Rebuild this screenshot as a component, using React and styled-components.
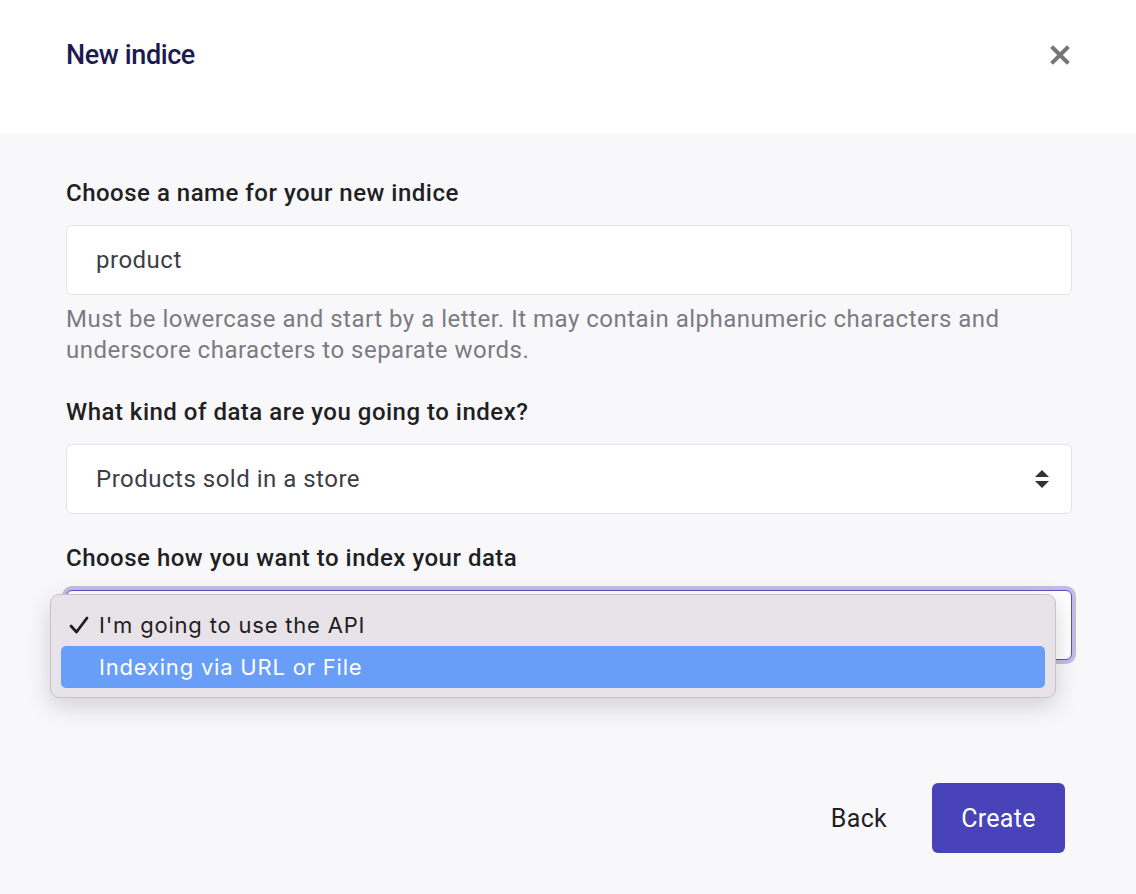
import React from "react";
import styled, { createGlobalStyle } from "styled-components";

const GlobalStyle = createGlobalStyle`
  body {
    margin: 0;
    font-family: Roboto, "Liberation Sans", sans-serif;
    background: #f8f8fa;
  }
`;

const Modal = styled.div`
  width: 1136px;
  height: 894px;
  display: flex;
  flex-direction: column;
  background: #f8f8fa;
`;

const Header = styled.div`
  height: 134px;
  box-sizing: border-box;
  background: #ffffff;
  padding: 38px 66px 0 66px;
  display: flex;
  justify-content: space-between;
  align-items: flex-start;
`;

const Title = styled.h1`
  margin: 0;
  font-size: 27px;
  line-height: 34px;
  font-weight: 500;
  letter-spacing: -0.4px;
  color: #1d1a52;
`;

const CloseButton = styled.button`
  border: none;
  background: none;
  padding: 0;
  margin-top: 7px;
  width: 20px;
  height: 20px;
  display: flex;
  align-items: center;
  justify-content: center;
  cursor: pointer;
`;

const Body = styled.div`
  flex: 1;
  padding: 45px 64px 0 66px;
  display: flex;
  flex-direction: column;
`;

const Field = styled.div`
  display: flex;
  flex-direction: column;
  margin-bottom: ${(p) => p.$space || 30}px;
  position: relative;
`;

const Label = styled.label`
  font-size: 24px;
  line-height: 28px;
  font-weight: 500;
  letter-spacing: 0.5px;
  color: #1f1f24;
  margin-bottom: 18px;
`;

const Box = styled.div`
  height: 70px;
  box-sizing: border-box;
  background: #ffffff;
  border: 1px solid ${(p) => (p.$focus ? "#5a4fc8" : "#e4e4e8")};
  border-radius: 6px;
  box-shadow: ${(p) => (p.$focus ? "0 0 0 4px rgba(110, 100, 180, 0.4)" : "none")};
  padding: 0 22px 0 29px;
  display: flex;
  align-items: center;
  justify-content: space-between;
  font-size: 24px;
  letter-spacing: 0.5px;
  color: #3d3d45;
`;

const Help = styled.p`
  margin: 9px 0 0;
  font-size: 24px;
  line-height: 31px;
  letter-spacing: 0.5px;
  color: #7b7b82;
  max-width: 960px;
`;

const Menu = styled.div`
  position: absolute;
  left: -16px;
  right: 16px;
  top: 50px;
  background: #e8e3e9;
  border: 1px solid #c6c2c8;
  border-radius: 9px;
  box-shadow: 0 8px 24px rgba(0, 0, 0, 0.16);
  padding: 9px 10px 9px;
  font-family: Inter, "Noto Sans", sans-serif;
`;

const Option = styled.div`
  height: 42px;
  border-radius: 5px;
  display: flex;
  align-items: center;
  padding-left: 8px;
  gap: 10px;
  font-size: 22px;
  letter-spacing: 0.8px;
  color: ${(p) => (p.$active ? "#ffffff" : "#1e1e20")};
  background: ${(p) => (p.$active ? "#689ef7" : "transparent")};
`;

const Check = styled.span`
  width: 20px;
  display: flex;
  align-items: center;
`;

const Footer = styled.div`
  margin-top: auto;
  padding: 0 71px 41px 0;
  display: flex;
  justify-content: flex-end;
  align-items: center;
  gap: 45px;
`;

const Button = styled.button`
  height: 70px;
  border: none;
  border-radius: 6px;
  font-family: Roboto, "Liberation Sans", sans-serif;
  font-size: 25px;
  letter-spacing: 0.3px;
  padding: ${(p) => (p.$primary ? "0 28px" : "0")};
  min-width: ${(p) => (p.$primary ? "133px" : "0")};
  background: ${(p) => (p.$primary ? "#4843b8" : "transparent")};
  color: ${(p) => (p.$primary ? "#ffffff" : "#1f1f24")};
  cursor: pointer;
`;

const SortArrows = () => (
  <svg width="14" height="18" viewBox="0 0 14 18">
    <path d="M7 0 L14 7 L0 7 Z" fill="#2f3236" />
    <path d="M0 11 L14 11 L7 18 Z" fill="#2f3236" />
  </svg>
);

const CloseIcon = () => (
  <svg width="20" height="20" viewBox="0 0 20 20">
    <path d="M3 3 L17 17 M17 3 L3 17" stroke="#767676" strokeWidth="4" strokeLinecap="square" />
  </svg>
);

const CheckIcon = () => (
  <svg width="20" height="18" viewBox="0 0 20 18">
    <path d="M2 10 L7.5 16 L18 2" stroke="#1e1e20" strokeWidth="2.8" fill="none" strokeLinecap="round" strokeLinejoin="round" />
  </svg>
);

export default function App() {
  return (
    <>
      <GlobalStyle />
      <Modal>
        <Header>
          <Title>New indice</Title>
          <CloseButton aria-label="Close">
            <CloseIcon />
          </CloseButton>
        </Header>
        <Body>
          <Field $space={32}>
            <Label>Choose a name for your new indice</Label>
            <Box>product</Box>
            <Help>
              Must be lowercase and start by a letter. It may contain alphanumeric characters and
              underscore characters to separate words.
            </Help>
          </Field>
          <Field $space={30}>
            <Label>What kind of data are you going to index?</Label>
            <Box>
              Products sold in a store
              <SortArrows />
            </Box>
          </Field>
          <Field>
            <Label>Choose how you want to index your data</Label>
            <Box $focus />
            <Menu>
              <Option>
                <Check>
                  <CheckIcon />
                </Check>
                I'm going to use the API
              </Option>
              <Option $active>
                <Check />
                Indexing via URL or File
              </Option>
            </Menu>
          </Field>
        </Body>
        <Footer>
          <Button>Back</Button>
          <Button $primary>Create</Button>
        </Footer>
      </Modal>
    </>
  );
}
